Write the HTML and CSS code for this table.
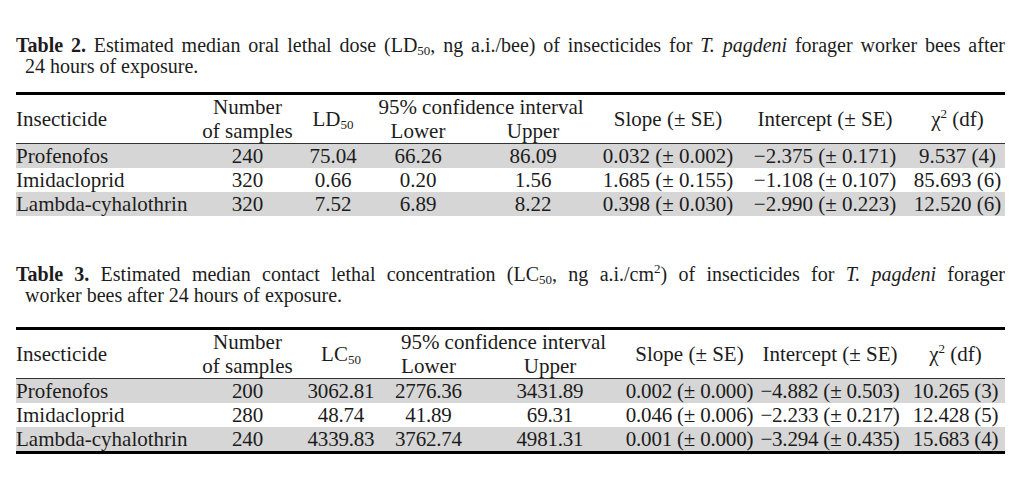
FILE: index.html
```html
<!DOCTYPE html>
<html lang="en">
<head>
<meta charset="utf-8">
<title>Tables</title>
<link rel="stylesheet" href="styles.css">
</head>
<body>
<div class="page">
  <section class="block t2">
    <p class="cap">
      <span class="line1"><b>Table 2.</b> Estimated median oral lethal dose (LD<sub>50</sub>, ng a.i./bee) of insecticides for <i>T. pagdeni</i> forager worker bees after</span>
      <span class="line2">24 hours of exposure.</span>
    </p>
    <table class="data">
      <colgroup>
        <col class="w179"><col class="w105"><col class="w66"><col class="w104"><col class="w126"><col class="w144"><col class="w170"><col class="w95">
      </colgroup>
      <thead>
        <tr>
          <th rowspan="2" class="left">Insecticide</th>
          <th rowspan="2">Number<br>of samples</th>
          <th rowspan="2">LD<sub>50</sub></th>
          <th colspan="2">95% confidence interval</th>
          <th rowspan="2">Slope (± SE)</th>
          <th rowspan="2">Intercept (± SE)</th>
          <th rowspan="2">χ<sup>2</sup> (df)</th>
        </tr>
        <tr>
          <th>Lower</th>
          <th>Upper</th>
        </tr>
      </thead>
      <tbody>
        <tr class="shade"><td class="left">Profenofos</td><td>240</td><td>75.04</td><td>66.26</td><td>86.09</td><td>0.032 (± 0.002)</td><td>−2.375 (± 0.171)</td><td>9.537 (4)</td></tr>
        <tr><td class="left">Imidacloprid</td><td>320</td><td>0.66</td><td>0.20</td><td>1.56</td><td>1.685 (± 0.155)</td><td>−1.108 (± 0.107)</td><td>85.693 (6)</td></tr>
        <tr class="shade"><td class="left">Lambda-cyhalothrin</td><td>320</td><td>7.52</td><td>6.89</td><td>8.22</td><td>0.398 (± 0.030)</td><td>−2.990 (± 0.223)</td><td>12.520 (6)</td></tr>
      </tbody>
    </table>
  </section>

  <section class="block t3">
    <p class="cap">
      <span class="line1"><b>Table 3.</b> Estimated median contact lethal concentration (LC<sub>50</sub>, ng a.i./cm<sup>2</sup>) of insecticides for <i>T. pagdeni</i> forager</span>
      <span class="line2">worker bees after 24 hours of exposure.</span>
    </p>
    <table class="data ruled">
      <colgroup>
        <col class="w179"><col class="w105"><col class="w82"><col class="w93"><col class="w150"><col class="w129"><col class="w152"><col class="w99">
      </colgroup>
      <thead>
        <tr>
          <th rowspan="2" class="left">Insecticide</th>
          <th rowspan="2">Number<br>of samples</th>
          <th rowspan="2">LC<sub>50</sub></th>
          <th colspan="2">95% confidence interval</th>
          <th rowspan="2">Slope (± SE)</th>
          <th rowspan="2">Intercept (± SE)</th>
          <th rowspan="2">χ<sup>2</sup> (df)</th>
        </tr>
        <tr>
          <th>Lower</th>
          <th>Upper</th>
        </tr>
      </thead>
      <tbody class="tight">
        <tr class="shade"><td class="left">Profenofos</td><td>200</td><td>3062.81</td><td>2776.36</td><td>3431.89</td><td>0.002 (± 0.000)</td><td>−4.882 (± 0.503)</td><td>10.265 (3)</td></tr>
        <tr><td class="left">Imidacloprid</td><td>280</td><td>48.74</td><td>41.89</td><td>69.31</td><td>0.046 (± 0.006)</td><td>−2.233 (± 0.217)</td><td>12.428 (5)</td></tr>
        <tr class="shade"><td class="left">Lambda-cyhalothrin</td><td>240</td><td>4339.83</td><td>3762.74</td><td>4981.31</td><td>0.001 (± 0.000)</td><td>−3.294 (± 0.435)</td><td>15.683 (4)</td></tr>
      </tbody>
    </table>
  </section>
</div>
</body>
</html>
```

FILE: styles.css
```css
html, body {
  margin: 0;
  padding: 0;
  background: #ffffff;
}

body {
  font-family: "Liberation Serif", "Times New Roman", serif;
  color: #1c1c1c;
}

.page {
  width: 989px;
  padding: 35px 0 0 16px;
}

.block {
  display: flex;
  flex-direction: column;
}

.t3 {
  margin-top: 48px;
}

.cap {
  margin: 0 0 15px 0;
  font-size: 20px;
  line-height: 21px;
}

.t3 .cap {
  margin-bottom: 21px;
}

.cap .line1 {
  display: block;
  text-align: justify;
  text-align-last: justify;
  white-space: nowrap;
}

.cap .line2 {
  display: block;
  padding-left: 9px;
}

.cap b {
  font-weight: bold;
}

.cap sub,
.data sub {
  font-size: 13px;
  line-height: 0;
  vertical-align: -3px;
}

.cap sup,
.data sup {
  font-size: 13px;
  line-height: 0;
  vertical-align: 8px;
}

.data {
  width: 989px;
  table-layout: fixed;
  border-collapse: collapse;
  border-top: 3px solid #000000;
  font-size: 21px;
  line-height: 24px;
}

.data.ruled {
  border-bottom: 3px solid #000000;
}

.data th,
.data td {
  padding: 0;
  font-weight: normal;
  text-align: center;
  white-space: nowrap;
  vertical-align: middle;
  height: 24px;
}

.data .left {
  text-align: left;
}

.tight td {
  letter-spacing: -0.2px;
}

.tight td.left {
  letter-spacing: 0;
}

.data thead tr:last-child th,
.data thead th[rowspan] {
  border-bottom: 1.5px solid #333333;
}

.data tr.shade td {
  background: #d6d6d6;
}

.w179 { width: 179px; }
.w105 { width: 105px; }
.w66 { width: 66px; }
.w104 { width: 104px; }
.w126 { width: 126px; }
.w144 { width: 144px; }
.w170 { width: 170px; }
.w95 { width: 95px; }
.w82 { width: 82px; }
.w93 { width: 93px; }
.w150 { width: 150px; }
.w129 { width: 129px; }
.w152 { width: 152px; }
.w99 { width: 99px; }
```
